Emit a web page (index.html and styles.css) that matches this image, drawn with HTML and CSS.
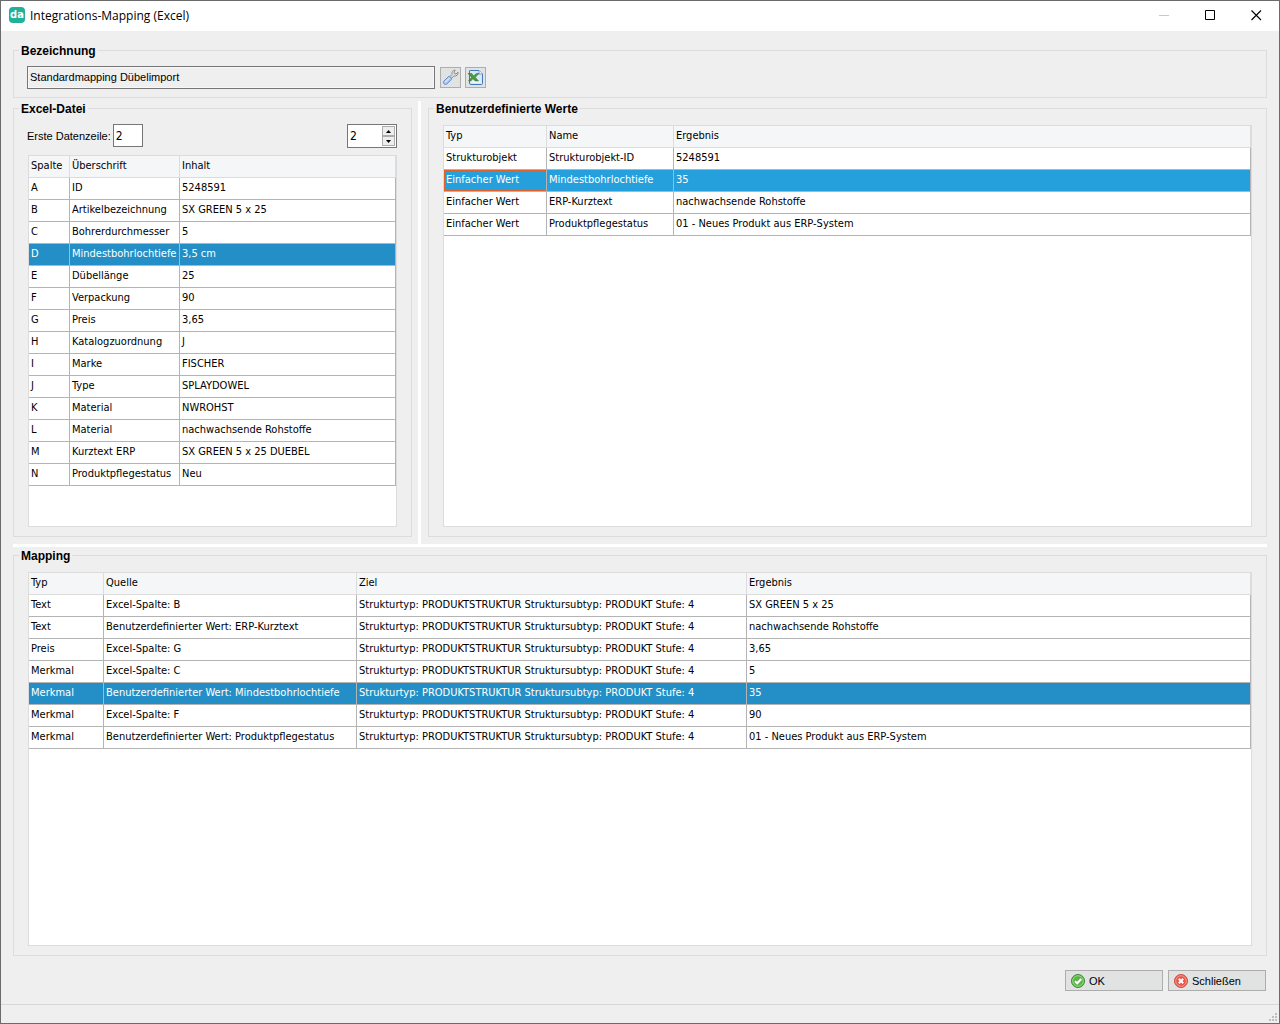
FILE: index.html
```html
<!doctype html>
<html lang="de">
<head>
    <meta charset="UTF-8">
    <title>Integrations-Mapping (Excel)</title>
    <link rel="stylesheet" href="styles.css">
</head>
<body>
<div class="window">

    <header class="titlebar">
        <span class="logo">da</span>
        <h1>Integrations-Mapping (Excel)</h1>
        <div class="window-buttons">
            <button type="button" aria-label="Minimieren" disabled>
                <svg width="11" height="11" viewBox="0 0 11 11"><path d="M0 5.5h10" stroke="#c8c8c8"/></svg>
            </button>
            <button type="button" aria-label="Maximieren">
                <svg width="11" height="11" viewBox="0 0 11 11"><path d="M.5.5h9v9h-9z" fill="none" stroke="#000"/></svg>
            </button>
            <button type="button" aria-label="Fenster schließen">
                <svg width="11" height="11" viewBox="0 0 11 11"><path d="M.5.5l9.500 9.500M10 .5l-9.500 9.500" stroke="#000" stroke-width="1.1"/></svg>
            </button>
        </div>
    </header>

    <main>
        <fieldset class="name-group">
            <legend>Bezeichnung</legend>
            <div class="name-row">
                <input class="name-input" type="text" value="Standardmapping Dübelimport" aria-label="Bezeichnung" readonly>
                <button class="tool" type="button" aria-label="Einstellungen">
                    <svg width="17" height="17" viewBox="0 0 17 17">
                        <path d="M7.500 8L10 5.500C9.300 3 11 1 13.300 1L12 3L13 5L15 4.500L16 3C16.500 5.800 14.500 7.500 12 7L9.500 9.500Z" fill="#dcdcdc" stroke="#8a8a8a" stroke-width=".9"/>
                        <path d="M1.800 12.200L6.300 7.700C7.300 6.900 8 7.500 8.700 8.200C9.600 9.100 10 9.900 9.200 10.700L4.900 15C3 16.500 .3 14.200 1.800 12.200Z" fill="#a9c6f0" stroke="#6f8ccc"/>
                        <path d="M3.300 13.200L7.300 9.200" stroke="#dbe8fb" stroke-width="1.200"/>
                    </svg>
                </button>
                <button class="tool" type="button" aria-label="Excel-Datei öffnen">
                    <svg width="17" height="17" viewBox="0 0 17 17">
                        <path d="M3 1.500h9l3.500 3.500v9.500a1 1 0 0 1-1 1h-10.500a1.500 1.500 0 0 1-1.500-1.500v-12a.5.5 0 0 1 .5-.5z" fill="#d8e8fa" stroke="#4577bd"/>
                        <path d="M12 1.500v3.500h3.500" fill="#fff" stroke="#6d9bd8"/>
                        <path d="M4.500 13h9" stroke="#fff"/>
                        <path d="M1 4.500h3.800l1.900 2.400L9.300 4.500H12L8.300 8.300L11.500 12H8.200L6 9.700L3.800 12H1.500L4.500 8.300z" fill="#4c9a3b" stroke="#2c6d25" stroke-width=".5"/>
                    </svg>
                </button>
            </div>
        </fieldset>

        <div class="panels">
            <fieldset class="excel-group">
                <legend>Excel-Datei</legend>
                <div class="excel-row">
                    <label for="firstRow">Erste Datenzeile:</label>
                    <input class="first-row" id="firstRow" type="text" value="2">
                    <div class="spinner">
                        <input type="text" value="2" aria-label="Aktuelle Zeile">
                        <div class="spinner-buttons">
                            <button type="button" aria-label="Zeile vor"><svg width="5" height="3" viewBox="0 0 5 3"><path d="M0 3L2.500 0L5 3z"/></svg></button>
                            <button type="button" aria-label="Zeile zurück"><svg width="5" height="3" viewBox="0 0 5 3"><path d="M0 0L2.500 3L5 0z"/></svg></button>
                        </div>
                    </div>
                </div>
                <div class="grid-box">
                    <table>
                        <colgroup><col class="col-letter"><col class="col-heading"><col></colgroup>
                        <thead>
                            <tr><th>Spalte</th><th>Überschrift</th><th>Inhalt</th></tr>
                        </thead>
                        <tbody>
                            <tr><td>A</td><td>ID</td><td>5248591</td></tr>
                            <tr><td>B</td><td>Artikelbezeichnung</td><td>SX GREEN 5 x 25</td></tr>
                            <tr><td>C</td><td>Bohrerdurchmesser</td><td>5</td></tr>
                            <tr class="selected"><td>D</td><td>Mindestbohrlochtiefe</td><td>3,5 cm</td></tr>
                            <tr><td>E</td><td>Dübellänge</td><td>25</td></tr>
                            <tr><td>F</td><td>Verpackung</td><td>90</td></tr>
                            <tr><td>G</td><td>Preis</td><td>3,65</td></tr>
                            <tr><td>H</td><td>Katalogzuordnung</td><td>J</td></tr>
                            <tr><td>I</td><td>Marke</td><td>FISCHER</td></tr>
                            <tr><td>J</td><td>Type</td><td>SPLAYDOWEL</td></tr>
                            <tr><td>K</td><td>Material</td><td>NWROHST</td></tr>
                            <tr><td>L</td><td>Material</td><td>nachwachsende Rohstoffe</td></tr>
                            <tr><td>M</td><td>Kurztext ERP</td><td>SX GREEN 5 x 25 DUEBEL</td></tr>
                            <tr><td>N</td><td>Produktpflegestatus</td><td>Neu</td></tr>
                        </tbody>
                    </table>
                </div>
            </fieldset>

            <div class="splitter-v"></div>

            <fieldset class="values-group">
                <legend>Benutzerdefinierte Werte</legend>
                <div class="grid-box">
                    <table>
                        <colgroup><col class="col-value-type"><col class="col-value-name"><col></colgroup>
                        <thead>
                            <tr><th>Typ</th><th>Name</th><th>Ergebnis</th></tr>
                        </thead>
                        <tbody>
                            <tr><td>Strukturobjekt</td><td>Strukturobjekt-ID</td><td>5248591</td></tr>
                            <tr class="selected active"><td class="focused">Einfacher Wert</td><td>Mindestbohrlochtiefe</td><td>35</td></tr>
                            <tr><td>Einfacher Wert</td><td>ERP-Kurztext</td><td>nachwachsende Rohstoffe</td></tr>
                            <tr><td>Einfacher Wert</td><td>Produktpflegestatus</td><td>01 - Neues Produkt aus ERP-System</td></tr>
                        </tbody>
                    </table>
                </div>
            </fieldset>
        </div>

        <div class="splitter-h"></div>

        <fieldset class="mapping-group">
            <legend>Mapping</legend>
            <div class="grid-box">
                <table>
                    <colgroup><col class="col-map-type"><col class="col-source"><col class="col-target"><col></colgroup>
                    <thead>
                        <tr><th>Typ</th><th>Quelle</th><th>Ziel</th><th>Ergebnis</th></tr>
                    </thead>
                    <tbody>
                        <tr><td>Text</td><td>Excel-Spalte: B</td><td>Strukturtyp: PRODUKTSTRUKTUR Struktursubtyp: PRODUKT Stufe: 4</td><td>SX GREEN 5 x 25</td></tr>
                        <tr><td>Text</td><td>Benutzerdefinierter Wert: ERP-Kurztext</td><td>Strukturtyp: PRODUKTSTRUKTUR Struktursubtyp: PRODUKT Stufe: 4</td><td>nachwachsende Rohstoffe</td></tr>
                        <tr><td>Preis</td><td>Excel-Spalte: G</td><td>Strukturtyp: PRODUKTSTRUKTUR Struktursubtyp: PRODUKT Stufe: 4</td><td>3,65</td></tr>
                        <tr><td>Merkmal</td><td>Excel-Spalte: C</td><td>Strukturtyp: PRODUKTSTRUKTUR Struktursubtyp: PRODUKT Stufe: 4</td><td>5</td></tr>
                        <tr class="selected"><td>Merkmal</td><td>Benutzerdefinierter Wert: Mindestbohrlochtiefe</td><td>Strukturtyp: PRODUKTSTRUKTUR Struktursubtyp: PRODUKT Stufe: 4</td><td>35</td></tr>
                        <tr><td>Merkmal</td><td>Excel-Spalte: F</td><td>Strukturtyp: PRODUKTSTRUKTUR Struktursubtyp: PRODUKT Stufe: 4</td><td>90</td></tr>
                        <tr><td>Merkmal</td><td>Benutzerdefinierter Wert: Produktpflegestatus</td><td>Strukturtyp: PRODUKTSTRUKTUR Struktursubtyp: PRODUKT Stufe: 4</td><td>01 - Neues Produkt aus ERP-System</td></tr>
                    </tbody>
                </table>
            </div>
        </fieldset>

        <div class="actions">
            <button type="button">
                <svg width="14" height="14" viewBox="0 0 14 14">
                    <circle cx="7" cy="7" r="6.500" fill="#5cb548" stroke="#3b8a35"/>
                    <circle cx="7" cy="7" r="5.300" fill="none" stroke="#a9dc9b" stroke-width=".8"/>
                    <path d="M4 7.200L6.200 9.300L10.200 5" fill="none" stroke="#fff" stroke-width="2"/>
                </svg>
                OK
            </button>
            <button type="button">
                <svg width="14" height="14" viewBox="0 0 14 14">
                    <circle cx="7" cy="7" r="6.500" fill="#e8564a" stroke="#cf4a42"/>
                    <circle cx="7" cy="7" r="5.300" fill="none" stroke="#f7aaa2" stroke-width=".8"/>
                    <path d="M4.800 4.800L9.200 9.200M9.200 4.800L4.800 9.200" stroke="#fff" stroke-width="2"/>
                </svg>
                Schließen
            </button>
        </div>
    </main>

    <footer class="statusbar">
        <svg width="8" height="8" viewBox="0 0 8 8" fill="#bfbfbf">
            <path d="M6 0h2v2h-2zM3 3h2v2h-2zM6 3h2v2h-2zM0 6h2v2h-2zM3 6h2v2h-2zM6 6h2v2h-2z"/>
        </svg>
    </footer>
</div>
</body>
</html>
```
FILE: styles.css
```css
:root {
    --face: #efefef;
    --line: #dcdcdc;
    --grid-line: #b4b4b4;
    --ui-font: "Liberation Sans", Arial, sans-serif;
    --grid-font: "DejaVu Sans Condensed", Tahoma, sans-serif;
}

* {
    box-sizing: border-box;
}

body {
    margin: 0;
    font: 11px/14px var(--ui-font);
    color: #000;
}

button, input {
    font: inherit;
    color: inherit;
    border-radius: 0;
    margin: 0;
}

svg {
    display: block;
    flex: none;
}

.window {
    display: flex;
    flex-direction: column;
    min-height: 100vh;
    background: var(--face);
    border: 1px solid #6b6b6b;
}

/* title bar */
.titlebar {
    display: flex;
    align-items: center;
    height: 30px;
    padding-left: 8px;
    background: #fff;
}

.titlebar h1 {
    margin: 0 auto 0 5px;
    font: 12px/16px "Open Sans", "Segoe UI", sans-serif;
}

.logo {
    width: 16px;
    height: 16px;
    margin-bottom: 2px;
    border-radius: 4px;
    background: #1fb199;
    color: #fff;
    font: bold 11px/16px "DejaVu Sans Condensed", sans-serif;
    text-align: center;
}

.window-buttons {
    display: flex;
}

.window-buttons button {
    display: flex;
    align-items: center;
    justify-content: center;
    width: 46px;
    height: 30px;
    padding: 0 0 2px;
    border: 0;
    background: none;
}

/* group boxes */
main {
    flex: 1;
    display: flex;
    flex-direction: column;
    padding: 12px 12px 0;
}

fieldset {
    display: flex;
    flex-direction: column;
    min-width: 0;
    margin: 0;
    padding: 9px 14px;
    border: 1px solid var(--line);
}

legend {
    margin-left: -9px;
    padding: 2px 2px 0;
    font: bold 12px/13px var(--ui-font);
}

.name-group {
    margin-bottom: 3px;
    padding: 8px 14px;
}

.name-row {
    display: flex;
    align-items: center;
    gap: 4px;
    margin-left: -1px;
}

.name-input {
    width: 408px;
    height: 23px;
    margin-right: 1px;
    padding: 0 2px 1px;
    border: 1px solid #767676;
    background: var(--face);
    box-shadow: inset 0 0 0 1px #f8f8f8;
}

.tool {
    display: flex;
    align-items: center;
    justify-content: center;
    width: 21px;
    height: 21px;
    padding: 0;
    border: 1px solid #adadad;
    background: #e1e2e2;
}

.panels {
    flex: 443 0 0;
    display: flex;
}

.excel-group {
    flex: 0 0 399px;
    margin-bottom: 7px;
    padding-top: 8px;
}

.values-group {
    flex: 1;
    margin-bottom: 7px;
}

.mapping-group {
    flex: 388 0 0;
    margin-top: 1px;
}

.splitter-v {
    width: 3px;
    margin: 0 7px 0 6px;
    background: #fff;
}

.splitter-h {
    height: 3px;
    background: #fff;
}

.excel-row {
    display: flex;
    align-items: flex-start;
    margin: 0 0 7px -1px;
}

.excel-row label {
    margin-right: 2px;
    line-height: 24px;
}

.first-row {
    width: 30px;
    height: 23px;
    padding: 0 2px;
    border: 1px solid #767676;
    background: #fff;
    font: 12px/16px var(--grid-font);
}

.spinner {
    display: flex;
    width: 50px;
    height: 24px;
    margin-left: auto;
    padding: 1px;
    border: 1px solid #767676;
    background: #fff;
}

.spinner input {
    flex: 1;
    min-width: 0;
    padding: 0 1px;
    border: 0;
    font: 12px/16px var(--grid-font);
}

.spinner-buttons {
    display: flex;
    flex-direction: column;
    width: 13px;
}

.spinner-buttons button {
    flex: 1;
    display: flex;
    align-items: center;
    justify-content: center;
    padding: 0;
    border: 1px solid #adadad;
    background: #eee;
}

/* data grids */
.grid-box {
    flex: 1;
    border: 1px solid var(--line);
    background: #fff;
}

table {
    width: 100%;
    table-layout: fixed;
    border-collapse: separate;
    border-spacing: 0;
    font: 11px/16px var(--grid-font);
}

th, td {
    height: 22px;
    padding: 0 2px 1px;
    border-right: 1px solid var(--grid-line);
    border-bottom: 1px solid var(--grid-line);
    font-weight: normal;
    text-align: left;
    white-space: nowrap;
    overflow: hidden;
}

th {
    border-color: var(--line);
    background: #f4f6f8;
}

.selected td {
    background: #238fc6;
    color: #fff;
}

.active td {
    background: #26a0dc;
}

.selected .focused {
    box-shadow: inset 0 0 0 1px #e0602a;
}

.col-letter { width: 41px; }
.col-heading { width: 110px; }
.col-value-type { width: 103px; }
.col-value-name { width: 127px; }
.col-map-type { width: 75px; }
.col-source { width: 253px; }
.col-target { width: 390px; }

/* bottom buttons */
.actions {
    display: flex;
    justify-content: flex-end;
    gap: 5px;
    padding: 14px 1px 13px;
}

.actions button {
    display: flex;
    align-items: center;
    gap: 4px;
    width: 98px;
    height: 21px;
    padding: 0 5px;
    border: 1px solid #adadad;
    background: #e1e2e2;
}

.statusbar {
    display: flex;
    align-items: flex-end;
    justify-content: flex-end;
    height: 19px;
    padding: 2px;
    border-top: 1px solid #d7d7d7;
}
```
